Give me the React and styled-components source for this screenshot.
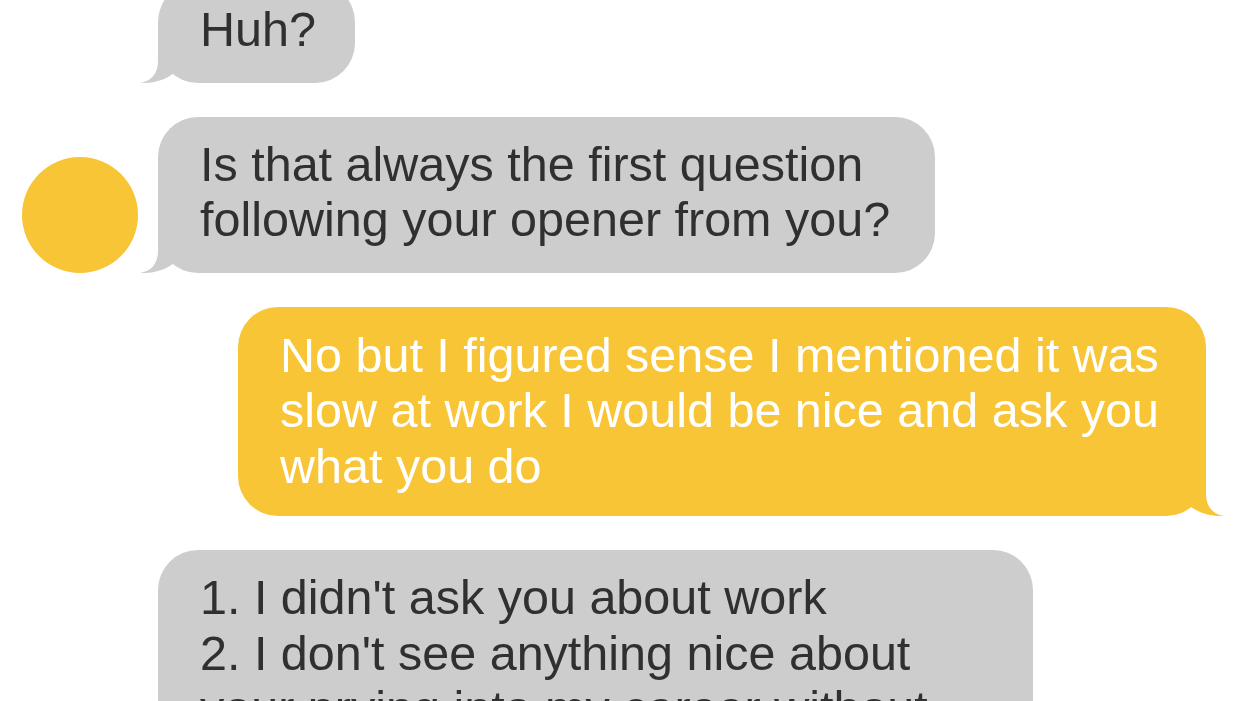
import React from "react";
import styled, { createGlobalStyle } from "styled-components";

const GRAY = "#cdcdcd";
const YELLOW = "#f8c537";

const GlobalStyle = createGlobalStyle`
  html, body {
    margin: 0;
    padding: 0;
    background: #ffffff;
    overflow: hidden;
  }
`;

const Screen = styled.div`
  width: 1245px;
  height: 701px;
  overflow: hidden;
  background: #ffffff;
  font-family: "Liberation Sans", Arial, "Helvetica Neue", sans-serif;
`;

const Thread = styled.div`
  display: flex;
  flex-direction: column;
  gap: 34px;
  margin-top: -18px;
`;

const Row = styled.div`
  display: flex;
  align-items: flex-end;
  justify-content: ${(p) => (p.$out ? "flex-end" : "flex-start")};
  padding: ${(p) =>
    p.$out ? "0 39px 0 0" : p.$avatar ? "0 0 0 22px" : "0 0 0 158px"};
  gap: 20px;
`;

const Avatar = styled.div`
  flex: none;
  width: 116px;
  height: 116px;
  border-radius: 50%;
  background: ${YELLOW};
`;

const Bubble = styled.div`
  position: relative;
  flex: none;
  box-sizing: border-box;
  width: ${(p) => p.$w}px;
  padding: ${(p) => (p.$out ? "21px 42px 22px" : "20px 42px 25px")};
  border-radius: 40px;
  background: ${(p) => (p.$out ? YELLOW : GRAY)};
  color: ${(p) => (p.$out ? "#ffffff" : "#303030")};
  font-size: 48.5px;
  line-height: 55.5px;
  white-space: nowrap;
`;

const Line = styled.span`
  display: block;
`;

const TailSvg = styled.svg`
  position: absolute;
  bottom: 0;
  width: 50px;
  height: 50px;
  ${(p) => (p.$out ? "right: -18px;" : "left: -18px; transform: scaleX(-1);")}
`;

function Tail({ out }) {
  return (
    <TailSvg $out={out} viewBox="0 0 50 50" aria-hidden="true">
      <path
        d="M32 4 L32 28 C32 40 38 48 50 50 C38 50.5 25 47.5 16 40 L10 4 Z"
        fill={out ? YELLOW : GRAY}
      />
    </TailSvg>
  );
}

function Message({ lines, out, width }) {
  return (
    <Bubble $out={out} $w={width}>
      {lines.map((l, i) => (
        <Line key={i}>{l}</Line>
      ))}
      <Tail out={out} />
    </Bubble>
  );
}

export default function App() {
  return (
    <Screen>
      <GlobalStyle />
      <Thread>
        <Row>
          <Message width={197} lines={["Huh?"]} />
        </Row>
        <Row $avatar>
          <Avatar />
          <Message
            width={777}
            lines={[
              "Is that always the first question",
              "following your opener from you?",
            ]}
          />
        </Row>
        <Row $out>
          <Message
            out
            width={968}
            lines={[
              "No but I figured sense I mentioned it was",
              "slow at work I would be nice and ask you",
              "what you do",
            ]}
          />
        </Row>
        <Row>
          <Message
            width={875}
            lines={[
              "1. I didn't ask you about work",
              "2. I don't see anything nice about",
              "your prying into my career without",
              "asking first",
            ]}
          />
        </Row>
      </Thread>
    </Screen>
  );
}
